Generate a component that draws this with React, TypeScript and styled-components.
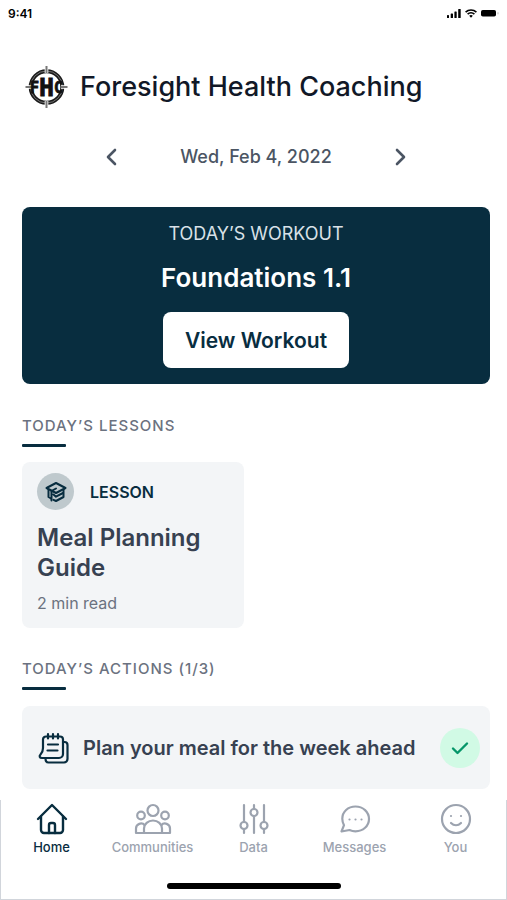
import React from "react";
import styled, { createGlobalStyle } from "styled-components";

const navy = "#082d3f";
const ink = "#374151";
const gray = "#6b7280";
const muted = "#9ca3af";
const panel = "#f3f5f7";

const GlobalStyle = createGlobalStyle`
  *, *::before, *::after { box-sizing: border-box; }
  body {
    margin: 0;
    background: #fff;
    font-family: Inter, "Liberation Sans", sans-serif;
  }
  button { font: inherit; border: 0; padding: 0; cursor: pointer; }
  h1, h2, h3, p, ul { margin: 0; padding: 0; }
`;

const Screen = styled.div`
  display: flex;
  flex-direction: column;
  min-height: 100vh;
`;

const StatusBar = styled.div`
  display: flex;
  align-items: center;
  justify-content: space-between;
  height: 26px;
  padding: 0 8px;
  color: #000;
  font-size: 12px;
  font-weight: 600;
`;

const StatusIcons = styled.div`
  display: flex;
  align-items: center;
  gap: 4px;
`;

const Main = styled.main`
  flex: 1;
  padding: 0 17px 11px 22px;
`;

const Brand = styled.header`
  display: flex;
  align-items: center;
  gap: 12px;
  height: 44px;
  margin-top: 39px;
  padding-left: 3px;
`;

const BrandName = styled.h1`
  color: #111827;
  font-size: 27px;
  line-height: 36px;
  font-weight: 500;
  white-space: nowrap;
`;

const DateNav = styled.div`
  display: flex;
  align-items: center;
  justify-content: space-between;
  width: 312px;
  max-width: 100%;
  height: 24px;
  margin: 36px auto 0;
  color: #4b5563;
  font-size: 18px;
  line-height: 24px;
  font-weight: 500;
`;

const DateButton = styled.button`
  display: flex;
  color: inherit;
  background: none;
`;

const Hero = styled.section`
  display: flex;
  flex-direction: column;
  align-items: center;
  margin-top: 38px;
  padding: 15px 16px 16px;
  border-radius: 8px;
  background: ${navy};
`;

const HeroLabel = styled.p`
  color: #d9e1e8;
  font-size: 18px;
  line-height: 24px;
`;

const HeroTitle = styled.h2`
  margin-top: 14px;
  color: #fff;
  font-size: 26px;
  line-height: 36px;
  font-weight: 600;
`;

const HeroButton = styled.button`
  height: 56px;
  margin-top: 16px;
  padding: 0 22px;
  border-radius: 8px;
  background: #fff;
  color: ${navy};
  && {
    font-size: 21px;
    font-weight: 600;
  }
`;

const Section = styled.section<{ $gap: number }>`
  margin-top: ${(p) => p.$gap}px;
`;

const SectionTitle = styled.h2`
  color: ${gray};
  font-size: 15px;
  line-height: 20px;
  font-weight: 500;
  letter-spacing: 1px;

  &::after {
    content: "";
    display: block;
    width: 44px;
    height: 3px;
    margin-top: 8px;
    border-radius: 1px;
    background: ${navy};
  }
`;

const LessonCard = styled.article`
  width: 222px;
  margin-top: 15px;
  padding: 11px 15px 15px;
  border-radius: 8px;
  background: ${panel};
`;

const LessonKind = styled.div`
  display: flex;
  align-items: center;
  gap: 16px;
  color: ${navy};
  font-size: 16px;
  font-weight: 600;
`;

const KindIcon = styled.span`
  display: flex;
  align-items: center;
  justify-content: center;
  width: 37px;
  height: 37px;
  border-radius: 50%;
  background: #bfc9cd;
`;

const LessonTitle = styled.h3`
  margin-top: 13px;
  color: ${ink};
  font-size: 24px;
  line-height: 30px;
  font-weight: 600;
`;

const LessonMeta = styled.p`
  margin-top: 10px;
  color: ${gray};
  font-size: 16px;
  line-height: 20px;
`;

const ActionCard = styled.div`
  display: flex;
  align-items: center;
  gap: 12px;
  height: 83px;
  margin-top: 16px;
  padding: 0 10px 0 15px;
  border-radius: 8px;
  background: ${panel};
  color: ${navy};
`;

const ActionText = styled.p`
  flex: 1;
  color: ${ink};
  font-size: 20px;
  line-height: 24px;
  font-weight: 600;
`;

const DoneButton = styled.button`
  display: flex;
  align-items: center;
  justify-content: center;
  width: 40px;
  height: 40px;
  border-radius: 50%;
  background: #d1fae5;
  color: #059669;
`;

const TabBar = styled.nav`
  display: flex;
  flex-direction: column;
  align-items: center;
  height: 100px;
  border: 1px solid #d1d5db;
  border-top: 0;
`;

const TabList = styled.ul`
  display: grid;
  grid-template-columns: repeat(5, 1fr);
  align-self: stretch;
  list-style: none;
`;

const Tab = styled.a<{ $active?: boolean }>`
  display: flex;
  flex-direction: column;
  align-items: center;
  gap: 3px;
  padding-top: 3px;
  color: ${(p) => (p.$active ? navy : muted)};
  font-size: 13px;
  line-height: 18px;
  font-weight: 500;
  text-decoration: none;
`;

const HomeIndicator = styled.div`
  width: 174px;
  height: 6px;
  margin-top: 27px;
  border-radius: 3px;
  background: #000;
`;

type IconProps = { size: number; stroke?: number; box?: number; children: React.ReactNode };

const Icon = ({ size, stroke = 2, box = 24, children }: IconProps) => (
  <svg
    width={size}
    height={size}
    viewBox={`0 0 ${box} ${box}`}
    fill="none"
    stroke="currentColor"
    strokeWidth={stroke}
    strokeLinecap="round"
    strokeLinejoin="round"
    aria-hidden="true"
  >
    {children}
  </svg>
);

const Signal = () => (
  <svg width="14" height="9" viewBox="0 0 14 9" aria-hidden="true">
    <rect x="0" y="6" width="2" height="3" rx="0.6" />
    <rect x="3.7" y="4.5" width="2.3" height="4.5" rx="0.6" />
    <rect x="7.4" y="2.5" width="2.3" height="6.5" rx="0.6" />
    <rect x="11.2" y="0" width="2.5" height="9" rx="0.6" />
  </svg>
);

const Wifi = () => (
  <svg width="12" height="9" viewBox="0 0 12 9" fill="none" stroke="#000" strokeWidth="1.6" aria-hidden="true">
    <path d="M0.6 3.1a7.8 7.8 0 0 1 10.8 0" />
    <path d="M2.6 5.2a4.9 4.9 0 0 1 6.8 0" />
    <path d="M4.2 6.8a2.6 2.6 0 0 1 3.6 0L6 8.7Z" fill="#000" stroke="none" />
  </svg>
);

const Battery = () => (
  <svg width="18" height="7" viewBox="0 0 18 7" aria-hidden="true">
    <rect width="15" height="6.6" rx="1.8" />
    <path d="M17 2.3v2" stroke="#bbb" />
  </svg>
);

const Logo = () => (
  <svg width="43" height="44" viewBox="0 0 43 44" role="img" aria-label="FHC">
    <circle cx="21.5" cy="22" r="15.8" fill="#fff" stroke="#1b1b1b" strokeWidth="4" />
    <circle cx="21.5" cy="22" r="16" fill="none" stroke="#999" strokeWidth="0.7" />
    <path d="M21.5 1v7M21.5 36v7M0.5 22H7M36 22h6.500" stroke="#fff" strokeWidth="3.600" />
    <path d="M21.5 1v7M21.5 36v7M0.5 22H7M36 22h6.500" stroke="#777" strokeWidth="2" />
    <text
      x="21.5"
      y="31"
      fill="#111"
      stroke="#111"
      strokeWidth="0.8"
      fontFamily="'DejaVu Sans Mono', monospace"
      fontWeight="700"
      textAnchor="middle"
    >
      <tspan fontSize="15" dy="-3">F</tspan>
      <tspan fontSize="25" dy="3">H</tspan>
      <tspan fontSize="15" dy="-3">C</tspan>
    </text>
  </svg>
);

const HomeIcon = () => (
  <Icon size={32} box={32} stroke={2.4}>
    <path d="M2 16 16 2l14 14" />
    <path d="M5 13.500V27a3 3 0 0 0 3 3h16a3 3 0 0 0 3-3V13.500" />
    <path d="M13 30v-8a2 2 0 0 1 2-2h2a2 2 0 0 1 2 2v8" />
  </Icon>
);

const PeopleIcon = () => (
  <svg
    width="38"
    height="32"
    viewBox="0 0 38 32"
    fill="none"
    stroke="currentColor"
    strokeWidth="2.2"
    strokeLinejoin="round"
    aria-hidden="true"
  >
    <circle cx="19" cy="7.500" r="5.500" />
    <circle cx="7" cy="12.500" r="3.800" />
    <circle cx="31" cy="12.500" r="3.800" />
    <path d="M10 30v-4.500a9 8 0 0 1 18 0V30Z" />
    <path d="M10 30H2v-4.500a5 5 0 0 1 8.800-3.200M28 30h8v-4.500a5 5 0 0 0-8.800-3.200" />
  </svg>
);

const SlidersIcon = () => (
  <Icon size={32} box={32} stroke={2.200}>
    <path d="M6 2v17M6 26v4M16 2v4M16 13v17M26 2v17M26 26v4" />
    <circle cx="6" cy="22.500" r="3.500" />
    <circle cx="16" cy="9.500" r="3.500" />
    <circle cx="26" cy="22.500" r="3.500" />
  </Icon>
);

const ChatIcon = () => (
  <Icon size={32} box={32} stroke={2.2}>
    <path d="M16.500 3.500C9 3.500 3.300 8.700 3.300 15.700c0 3 .9 5 1.700 6.500L2.500 28.500l8-1.500c2 .9 4 1.300 6 1.300C24 28.300 30 23 30 16S24 3.500 16.500 3.500Z" />
    <path d="M10.500 16.500h.01M16.500 16.500h.01M22.500 16.500h.01" />
  </Icon>
);

const SmileIcon = () => (
  <Icon size={32} box={32} stroke={2.2}>
    <circle cx="16" cy="16" r="14" />
    <path d="M11 13h.01M21 13h.01M11 20c3 3 7 3 10 0" />
  </Icon>
);

const CapIcon = () => (
  <Icon size={24} stroke={2}>
    <path d="M12 3 21.500 8 12 13 2.500 8Z" />
    <path d="M4.500 9.500v7.500l2.500 1.500M19.500 9.500V17L12 21l-2.500-1.200" />
    <path d="M12 8.500 7.500 11v9.500M9.500 14.500l2.500 2.200 7-3.700" />
  </Icon>
);

const NotesIcon = () => (
  <Icon size={34} stroke={2.2} box={34}>
    <path d="M9 5.500h14a3 3 0 0 1 3 3V23a4 4 0 0 1-4 4H5c-2.500 0-3-2-1.500-3.500C5 22 6 20 6 17V8.500a3 3 0 0 1 3-3Z" />
    <path d="M26 11h1.500a3 3 0 0 1 3 3v14a3.500 3.500 0 0 1-3.500 3.500H11.500c-2 0-3-1.500-3-4" />
    <path d="M11 3v4.500M16 3v4.500M21 3v4.500M11 13.500h10M10.500 19.500H20.500" />
  </Icon>
);

const tabs = [
  { label: "Home", icon: <HomeIcon />, active: true },
  { label: "Communities", icon: <PeopleIcon /> },
  { label: "Data", icon: <SlidersIcon /> },
  { label: "Messages", icon: <ChatIcon /> },
  { label: "You", icon: <SmileIcon /> },
];

export default function App() {
  return (
    <Screen>
      <GlobalStyle />
      <StatusBar>
        <span>9:41</span>
        <StatusIcons>
          <Signal />
          <Wifi />
          <Battery />
        </StatusIcons>
      </StatusBar>
      <Main>
        <Brand>
          <Logo />
          <BrandName>Foresight Health Coaching</BrandName>
        </Brand>
        <DateNav>
          <DateButton type="button" aria-label="Previous day">
            <Icon size={24} stroke={2.600}>
              <path d="m15 5-7 7 7 7" />
            </Icon>
          </DateButton>
          <span>Wed, Feb 4, 2022</span>
          <DateButton type="button" aria-label="Next day">
            <Icon size={24} stroke={2.600}>
              <path d="m9 5 7 7-7 7" />
            </Icon>
          </DateButton>
        </DateNav>
        <Hero>
          <HeroLabel>TODAY’S WORKOUT</HeroLabel>
          <HeroTitle>Foundations 1.1</HeroTitle>
          <HeroButton type="button">View Workout</HeroButton>
        </Hero>
        <Section $gap={32}>
          <SectionTitle>TODAY’S LESSONS</SectionTitle>
          <LessonCard>
            <LessonKind>
              <KindIcon>
                <CapIcon />
              </KindIcon>
              LESSON
            </LessonKind>
            <LessonTitle>Meal Planning Guide</LessonTitle>
            <LessonMeta>2 min read</LessonMeta>
          </LessonCard>
        </Section>
        <Section $gap={31}>
          <SectionTitle>TODAY’S ACTIONS (1/3)</SectionTitle>
          <ActionCard>
            <NotesIcon />
            <ActionText>Plan your meal for the week ahead</ActionText>
            <DoneButton type="button" aria-label="Completed">
              <Icon size={24} stroke={2.400}>
                <path d="m5 12.500 4.500 4.500L19 7.500" />
              </Icon>
            </DoneButton>
          </ActionCard>
        </Section>
      </Main>
      <TabBar aria-label="Main">
        <TabList>
          {tabs.map((t) => (
            <li key={t.label}>
              <Tab href="#" $active={t.active} aria-current={t.active ? "page" : undefined}>
                {t.icon}
                {t.label}
              </Tab>
            </li>
          ))}
        </TabList>
        <HomeIndicator />
      </TabBar>
    </Screen>
  );
}
